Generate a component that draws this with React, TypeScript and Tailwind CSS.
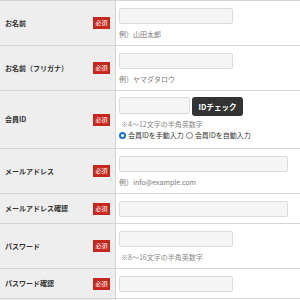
const font = { fontFamily: '"Noto Sans CJK JP", "Noto Sans", sans-serif' };

function Badge() {
  return (
    <span className="flex h-[12px] w-[17px] items-center justify-center bg-[#c6271d] text-[6px] leading-none text-white">
      必須
    </span>
  );
}

function Label({ text }: { text: string }) {
  return (
    <div className="flex w-[116px] shrink-0 items-center justify-between border-r border-[#d4d4d4] bg-[#eeeeee] pl-[5px] pr-[5px]">
      <span className="text-[7px] font-bold text-[#333]">{text}</span>
      <Badge />
    </div>
  );
}

function Input({ w }: { w: string }) {
  return <div className={`h-[16px] rounded-[2px] border border-[#dcdcdc] bg-[#f5f5f5] ${w}`} />;
}

function Hint({ text }: { text: string }) {
  return <p className="mt-[5px] text-[7px] leading-[10px] text-[#777]">{text}</p>;
}

function Radio({ checked }: { checked?: boolean }) {
  return checked ? (
    <span className="flex h-[7px] w-[7px] shrink-0 items-center justify-center rounded-full bg-[#1a6fdc]">
      <span className="block h-[3px] w-[3px] rounded-full bg-white" />
    </span>
  ) : (
    <span className="block h-[7px] w-[7px] shrink-0 rounded-full border border-[#777] bg-white" />
  );
}

export default function App() {
  return (
    <div className="h-[300px] w-[300px] overflow-hidden bg-white" style={font}>
      <div className="border-t border-[#d4d4d4]">
        <div className="flex border-b border-[#d4d4d4]">
          <Label text="お名前" />
          <div className="flex-1 pb-[6px] pl-[3px] pt-[7px]">
            <Input w="w-[114px]" />
            <Hint text="例）山田太郎" />
          </div>
        </div>

        <div className="flex border-b border-[#d4d4d4]">
          <Label text="お名前（フリガナ）" />
          <div className="flex-1 pb-[6px] pl-[3px] pt-[7px]">
            <Input w="w-[114px]" />
            <Hint text="例）ヤマダタロウ" />
          </div>
        </div>

        <div className="flex border-b border-[#d4d4d4]">
          <Label text="会員ID" />
          <div className="flex-1 pb-[7px] pl-[3px] pt-[6px]">
            <div className="flex items-start gap-[2px]">
              <div className="h-[17px] w-[71px] rounded-[2px] border border-[#dcdcdc] bg-[#f5f5f5]" />
              <button className="flex h-[19px] w-[51px] items-center justify-center rounded-[3px] bg-[#333] text-[7.5px] font-bold text-white">
                IDチェック
              </button>
            </div>
            <p className="ml-[2px] mt-[3px] text-[7px] leading-[10px] text-[#888]">※4～12文字の半角英数字</p>
            <div className="flex h-[12px] items-center text-[7px] text-[#333]">
              <Radio checked />
              <span className="ml-[2px]">会員IDを手動入力</span>
              <span className="ml-[2px]">
                <Radio />
              </span>
              <span className="ml-[2px]">会員IDを自動入力</span>
            </div>
          </div>
        </div>

        <div className="flex border-b border-[#d4d4d4]">
          <Label text="メールアドレス" />
          <div className="flex-1 pb-[6px] pl-[3px] pt-[7px]">
            <Input w="w-[169px]" />
            <Hint text="例）info@example.com" />
          </div>
        </div>

        <div className="flex border-b border-[#d4d4d4]">
          <Label text="メールアドレス確認" />
          <div className="flex-1 pb-[6px] pl-[3px] pt-[7px]">
            <Input w="w-[169px]" />
          </div>
        </div>

        <div className="flex border-b border-[#d4d4d4]">
          <Label text="パスワード" />
          <div className="flex-1 pb-[6px] pl-[3px] pt-[7px]">
            <Input w="w-[114px]" />
            <p className="ml-[2px] mt-[5px] text-[7px] leading-[10px] text-[#888]">※8～16文字の半角英数字</p>
          </div>
        </div>

        <div className="flex border-b border-[#d4d4d4]">
          <Label text="パスワード確認" />
          <div className="flex-1 pb-[6px] pl-[3px] pt-[7px]">
            <Input w="w-[114px]" />
          </div>
        </div>

        <div className="flex h-[20px]">
          <div className="w-[116px] shrink-0 border-r border-[#d4d4d4] bg-[#eeeeee]" />
          <div className="flex-1" />
        </div>
      </div>
    </div>
  );
}
